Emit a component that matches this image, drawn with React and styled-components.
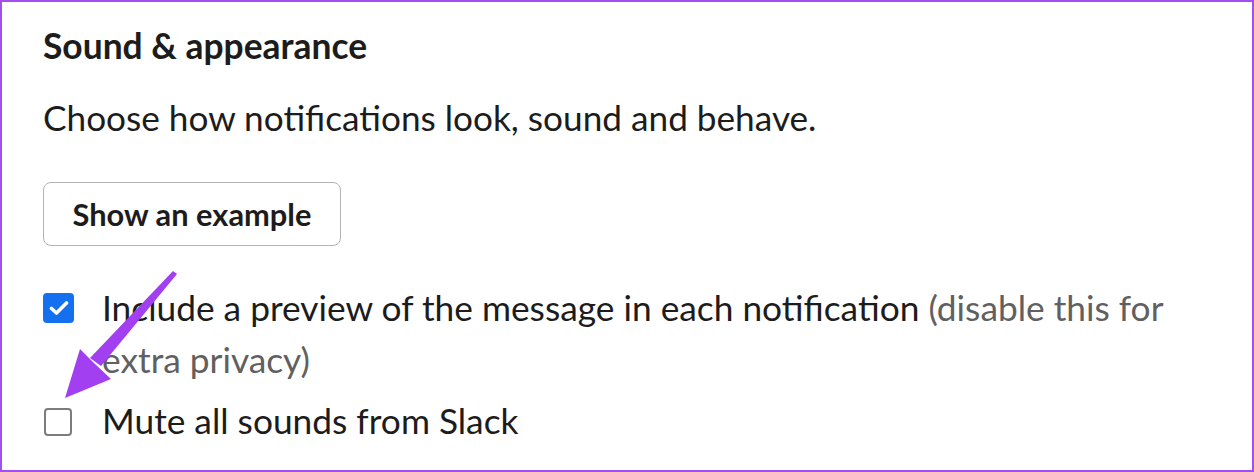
import React from "react";
import styled, { createGlobalStyle } from "styled-components";

const GlobalStyle = createGlobalStyle`
  html, body {
    margin: 0;
    padding: 0;
    background: #ffffff;
  }
  body {
    font-family: Lato, "Noto Sans", "Liberation Sans", sans-serif;
    color: #1d1c1d;
  }
`;

const Frame = styled.div`
  position: relative;
  box-sizing: border-box;
  width: 1254px;
  height: 472px;
  border: 2px solid #a24ff2;
  padding: 22px 40px 0 41px;
  background: #fff;
  overflow: hidden;
`;

const Heading = styled.h2`
  margin: 0;
  font-size: 35.4px;
  font-weight: 700;
  line-height: 44px;
  color: #1d1c1d;
`;

const Description = styled.p`
  margin: 28.5px 0 0;
  font-size: 35.2px;
  line-height: 40px;
  color: #1d1c1d;
`;

const Button = styled.button`
  display: block;
  box-sizing: border-box;
  margin-top: 45.5px;
  width: 298px;
  height: 64px;
  padding: 0;
  border: 1.5px solid #b3b3b3;
  border-radius: 8px;
  background: #fff;
  font-family: inherit;
  font-size: 30.8px;
  font-weight: 700;
  color: #1d1c1d;
  cursor: pointer;
`;

const Options = styled.div`
  margin-top: 36px;
  display: flex;
  flex-direction: column;
  gap: 9px;
`;

const Row = styled.label`
  display: flex;
  align-items: flex-start;
  gap: 28px;
  font-size: 35.3px;
  line-height: 52px;
  color: #1d1c1d;
`;

const Box = styled.span`
  flex: none;
  box-sizing: border-box;
  width: ${(p) => (p.$checked ? 31 : 28)}px;
  height: ${(p) => (p.$checked ? 30 : 28)}px;
  margin: ${(p) => (p.$checked ? "11px 0 0 0" : "13px 2px 0 1px")};
  border-radius: 4px;
  border: ${(p) => (p.$checked ? "none" : "2px solid #7c7c7c")};
  background: ${(p) => (p.$checked ? "#1570ef" : "#fff")};
  display: flex;
  align-items: center;
  justify-content: center;
`;

const Hint = styled.span`
  color: #616061;
`;

const LabelText = styled.span`
  flex: 1;
`;

const Annotation = styled.svg`
  position: absolute;
  left: 0;
  top: 0;
  pointer-events: none;
`;

function Checkbox({ checked }) {
  return (
    <Box $checked={checked}>
      {checked && (
        <svg width="20" height="16" viewBox="0 0 20 16">
          <path
            d="M2.5 8.5 L7.5 13 L17.5 3"
            fill="none"
            stroke="#fff"
            strokeWidth="3.6"
            strokeLinecap="round"
            strokeLinejoin="round"
          />
        </svg>
      )}
    </Box>
  );
}

export default function App() {
  return (
    <>
      <GlobalStyle />
      <Frame>
        <Heading>Sound &amp; appearance</Heading>
        <Description>Choose how notifications look, sound and behave.</Description>
        <Button>Show an example</Button>
        <Options>
          <Row>
            <Checkbox checked />
            <LabelText>
              Include a preview of the message in each notification{" "}
              <Hint>(disable this for extra privacy)</Hint>
            </LabelText>
          </Row>
          <Row>
            <Checkbox />
            <LabelText>Mute all sounds from Slack</LabelText>
          </Row>
        </Options>
        {/* annotation arrow drawn over the settings */}
        <Annotation width="1254" height="472" viewBox="0 0 1254 472">
          <path d="M171 269 L175 272 L99 364 L88 356 Z" fill="#a23ff0" />
          <path d="M63 396 L78 347 L93 362 L109 377 Z" fill="#a23ff0" />
        </Annotation>
      </Frame>
    </>
  );
}
